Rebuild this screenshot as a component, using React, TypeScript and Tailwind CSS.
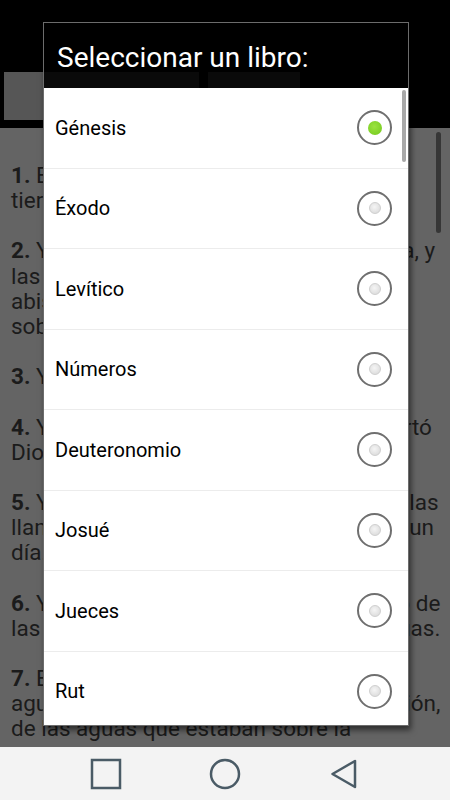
import React from "react";

const books = [
  "Génesis",
  "Éxodo",
  "Levítico",
  "Números",
  "Deuteronomio",
  "Josué",
  "Jueces",
  "Rut",
];

// verse number + the lines as the page wraps them (cut where the nav bar hides the rest)
const verses: { n: number; lines: string[] }[] = [
  { n: 1, lines: ["En el principio crió Dios los cielos y la", "tierra."] },
  {
    n: 2,
    lines: [
      "Y la tierra estaba desordenada y vacía, y",
      "las tinieblas estaban sobre la haz del",
      "abismo, y el Espíritu de Dios se movía",
      "sobre la haz de las aguas.",
    ],
  },
  { n: 3, lines: ["Y dijo Dios: Sea la luz: y fué la luz."] },
  {
    n: 4,
    lines: ["Y vió Dios que la luz era buena: y apartó", "Dios la luz de las tinieblas."],
  },
  {
    n: 5,
    lines: [
      "Y llamó Dios á la luz Día, y á las tinieblas",
      "llamó Noche: y fué la tarde y la mañana un",
      "día.",
    ],
  },
  {
    n: 6,
    lines: [
      "Y dijo Dios: Haya expansión en medio de",
      "las aguas, y separe las aguas de las aguas.",
    ],
  },
  {
    n: 7,
    lines: [
      "E hizo Dios la expansión, y apartó las",
      "aguas que estaban debajo de la expansión,",
      "de las aguas que estaban sobre la",
    ],
  },
];

function Radio({ checked }: { checked: boolean }) {
  return (
    <div className="flex h-[35px] w-[35px] items-center justify-center rounded-full border-2 border-[#6f6f6f] bg-white">
      {checked ? (
        <div className="h-[14px] w-[14px] rounded-full bg-[radial-gradient(circle_at_45%_40%,#9be33f,#72c81c)]" />
      ) : (
        <div className="h-[12px] w-[12px] rounded-full border border-[#cfcfcf] bg-[radial-gradient(circle_at_45%_40%,#f5f5f5,#d6d6d6)]" />
      )}
    </div>
  );
}

export default function App() {
  return (
    <div className="relative flex h-[800px] w-[450px] flex-col overflow-hidden bg-black font-['Roboto',sans-serif]">
      {/* dimmed action bar + tabs */}
      <div className="flex h-[128px] shrink-0 gap-[9px] bg-black pl-[4px] pt-[72px]">
        <div className="h-[48px] w-[195px] bg-[#565656]" />
        <div className="h-[48px] w-[92px] bg-[#565656]" />
      </div>

      {/* dimmed chapter text */}
      <div className="relative flex-1 overflow-hidden bg-[#646464] pl-[11px] pr-[12px] pt-[35px] text-[22.5px] leading-[25.15px] text-[#1b1b1b]">
        {verses.map((v) => (
          <p key={v.n} className="mb-[25.15px] whitespace-nowrap">
            <span className="font-bold">{v.n}.</span>{" "}
            {v.lines.map((l, i) => (
              <React.Fragment key={i}>
                {i > 0 && <br />}
                {l}
              </React.Fragment>
            ))}
          </p>
        ))}
        <div className="absolute right-[9px] top-[4px] h-[101px] w-[5px] rounded-full bg-[#363636]" />
      </div>

      {/* nav bar */}
      <div className="flex h-[53px] shrink-0 items-center justify-center bg-[#f3f3f3]">
        <div className="flex w-[119px] justify-center">
          <svg width="32" height="32" viewBox="0 0 32 32" fill="none" stroke="#4a5b66" strokeWidth="2.5">
            <rect x="2" y="2" width="28" height="28" />
          </svg>
        </div>
        <div className="flex w-[119px] justify-center">
          <svg width="32" height="32" viewBox="0 0 32 32" fill="none" stroke="#4a5b66" strokeWidth="2.5">
            <circle cx="16" cy="16" r="14" />
          </svg>
        </div>
        <div className="flex w-[119px] justify-center">
          <svg width="32" height="32" viewBox="0 0 32 32" fill="none" stroke="#4a5b66" strokeWidth="2.5" strokeLinejoin="round">
            <path d="M4.5 16 L27 3 L27 29 Z" />
          </svg>
        </div>
      </div>

      {/* book picker dialog */}
      <div className="absolute left-[43px] top-[22px] w-[366px] border border-[#6c6c6c] shadow-[2px_4px_6px_rgba(0,0,0,0.55)]">
        <div className="flex h-[65px] items-center bg-[rgba(0,0,0,0.88)] pl-[13px] pt-[5px] text-[28px] text-white">
          Seleccionar un libro:
        </div>
        <div className="relative h-[637px] overflow-hidden bg-white">
          {books.map((b, i) => (
            <div
              key={b}
              className="flex h-[80.5px] items-center justify-between border-b border-[#ececec] pl-[11px] pr-[16px] text-[20px] text-black"
            >
              <span>{b}</span>
              <Radio checked={i === 0} />
            </div>
          ))}
          <div className="absolute right-[2px] top-[2px] h-[72px] w-[4px] rounded-full bg-[#a8a8a8]" />
        </div>
      </div>
    </div>
  );
}
